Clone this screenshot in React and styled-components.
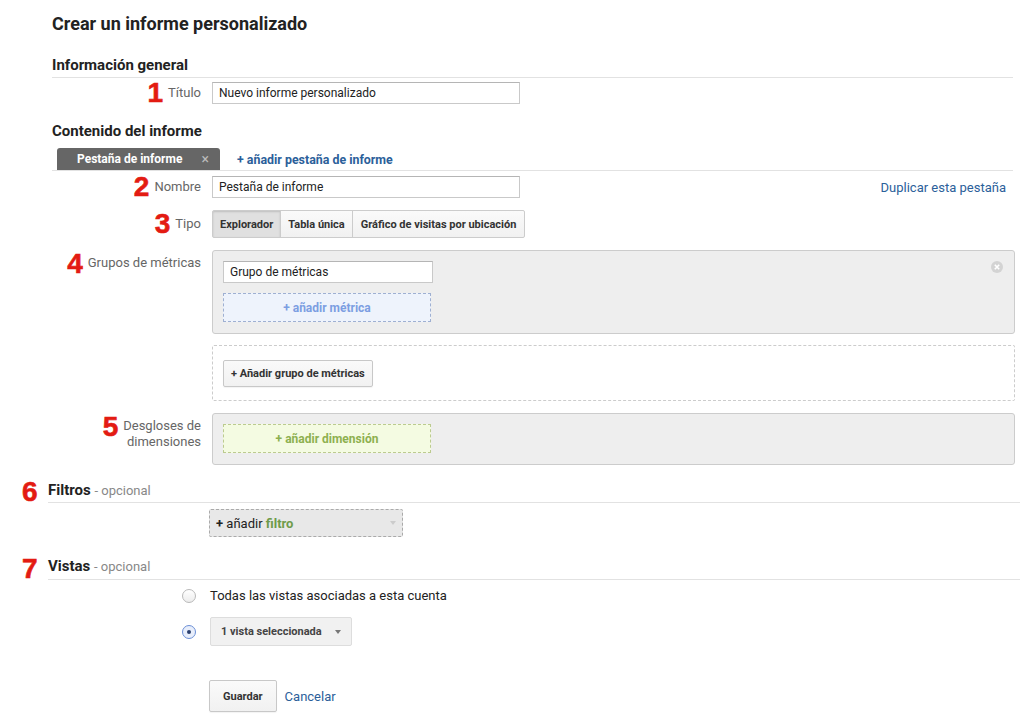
import React from 'react';
import styled, {createGlobalStyle} from 'styled-components';

const GlobalStyle = createGlobalStyle`
  body {
    margin: 0;
    background: #fff;
    font-family: Roboto, "Noto Sans", Arial, sans-serif;
    color: #222;
  }
`;

const Page = styled.div`
  width: 1026px;
  box-sizing: border-box;
  padding: 14px 6px 10px 48px;
`;

const Title = styled.h1`
  margin: 0 0 0 4px;
  font-size: 18px;
  line-height: 20px;
  font-weight: 700;
  color: #222;
`;

const SubHeading = styled.h2`
  margin: ${(p) => p.$mt || 0}px 7px 0 4px;
  font-size: 15px;
  line-height: 18px;
  font-weight: 700;
  color: #222;
  padding-bottom: ${(p) => (p.$line ? 3 : 0)}px;
  border-bottom: ${(p) => (p.$line ? '1px solid #e2e2e2' : 'none')};
`;

const Row = styled.div`
  display: grid;
  grid-template-columns: 164px 1fr;
  margin-top: ${(p) => p.$mt || 0}px;
  margin-right: 5px;
`;

const Label = styled.div`
  display: flex;
  justify-content: flex-end;
  align-items: ${(p) => (p.$top ? 'flex-start' : 'center')};
  padding: ${(p) => (p.$top ? '5px' : '0')} 11px 0 0;
  gap: 5px;
  font-size: 13px;
  line-height: 16px;
  color: #666;
  text-align: right;
`;

const Num = styled.span`
  font-family: "Liberation Sans", Arial, sans-serif;
  font-weight: 700;
  font-size: 28px;
  line-height: 18px;
  color: #e31b12;
  -webkit-text-stroke: 0.6px #e31b12;
`;

const Field = styled.div`
  display: flex;
  align-items: center;
  justify-content: space-between;
`;

const TextInput = styled.div`
  box-sizing: border-box;
  width: ${(p) => p.$w || 308}px;
  height: 22px;
  border: 1px solid #c9c9c9;
  border-top-color: #b5b5b5;
  background: #fff;
  font-size: 12px;
  line-height: 20px;
  padding: 0 6px;
  color: #222;
`;

const Link = styled.a`
  font-size: ${(p) => p.$size || 13}px;
  font-weight: ${(p) => (p.$bold ? 700 : 400)};
  color: #2b609a;
  text-decoration: none;
  cursor: pointer;
`;

const TabBar = styled.div`
  display: flex;
  align-items: flex-end;
  gap: 17px;
  margin: 8px 7px 0 4px;
  padding-left: 5px;
  border-bottom: 1px solid #e2e2e2;
`;

const Tab = styled.div`
  display: flex;
  align-items: center;
  justify-content: space-between;
  box-sizing: border-box;
  width: 163px;
  height: 22px;
  padding: 0 11px 0 20px;
  background: #666;
  border-radius: 3px 3px 0 0;
  color: #fff;
  font-size: 12px;
  font-weight: 700;
`;

const TabClose = styled.span`
  color: #bbb;
  font-size: 14px;
  font-weight: 400;
`;

const TabLinkWrap = styled.div`
  height: 22px;
  line-height: 22px;
`;

const Segments = styled.div`
  display: flex;
`;

const Segment = styled.div`
  box-sizing: border-box;
  height: 28px;
  padding: 0 ${(p) => p.$pad || 7}px;
  display: flex;
  align-items: center;
  font-size: 11px;
  font-weight: 700;
  color: #333;
  border: 1px solid #ccc;
  margin-left: -1px;
  background: ${(p) => (p.$active ? '#e0e0e0' : 'linear-gradient(#fafafa, #f1f1f1)')};
  box-shadow: ${(p) => (p.$active ? 'inset 0 1px 2px rgba(0,0,0,0.15)' : 'none')};
  &:first-child {
    margin-left: 0;
    border-radius: 2px 0 0 2px;
  }
  &:last-child {
    border-radius: 0 2px 2px 0;
  }
`;

const GrayBox = styled.div`
  position: relative;
  box-sizing: border-box;
  height: ${(p) => p.$h}px;
  padding: 10px;
  background: #eee;
  border: 1px solid #ccc;
  border-radius: 3px;
  display: flex;
  flex-direction: column;
  gap: 10px;
`;

const CloseBtn = styled.span`
  position: absolute;
  top: 10px;
  right: 11px;
  width: 12px;
  height: 12px;
  display: flex;
`;

const AddZone = styled.div`
  box-sizing: border-box;
  width: 208px;
  height: 29px;
  display: flex;
  align-items: center;
  justify-content: center;
  font-size: 12px;
  font-weight: 700;
  border: 1px dashed ${(p) => p.$border};
  background: ${(p) => p.$bg};
  color: ${(p) => p.$color};
`;

const DashedBox = styled.div`
  box-sizing: border-box;
  height: 56px;
  padding: 0 10px;
  display: flex;
  align-items: center;
  border: 1px dashed #ccc;
  border-radius: 2px;
`;

const Button = styled.button`
  box-sizing: border-box;
  height: ${(p) => p.$h || 27}px;
  padding: 0 ${(p) => p.$pad || 7}px;
  font-family: Roboto, Arial, sans-serif;
  font-size: 11px;
  font-weight: 700;
  color: #333;
  background: linear-gradient(#fafafa, #f1f1f1);
  border: 1px solid #c8c8c8;
  border-radius: 2px;
  box-shadow: 0 1px 1px rgba(0,0,0,0.05);
  cursor: pointer;
`;

const SectionHeader = styled.div`
  display: flex;
  align-items: center;
  margin: ${(p) => p.$mt}px 0 0 -26px;
`;

const SectionNum = styled(Num)`
  width: 14px;
  margin-right: 12px;
`;

const SectionTitle = styled.div`
  flex: 1;
  font-size: 15px;
  line-height: 18px;
  font-weight: 700;
  color: #222;
  padding-bottom: ${(p) => p.$pb}px;
  border-bottom: 1px solid #e2e2e2;
`;

const Optional = styled.span`
  font-size: 13px;
  font-weight: 400;
  color: #888;
`;

const Indented = styled.div`
  display: flex;
  align-items: center;
  gap: 8px;
  margin: ${(p) => p.$mt}px 0 0 161px;
`;

const FilterSelect = styled.div`
  box-sizing: border-box;
  width: 194px;
  height: 28px;
  padding: 0 6px;
  display: flex;
  align-items: center;
  justify-content: space-between;
  background: #e8e8e8;
  border: 1px dashed #aaa;
  border-radius: 2px;
  font-size: 13px;
  color: #222;
`;

const Green = styled.b`
  color: #6e9b4a;
`;

const Caret = styled.span`
  width: 0;
  height: 0;
  border-left: 3.5px solid transparent;
  border-right: 3.5px solid transparent;
  border-top: 4px solid ${(p) => p.$color};
`;

const RadioRow = styled.label`
  display: flex;
  align-items: center;
  gap: 14px;
  margin: ${(p) => p.$mt}px 0 0 134px;
  font-size: 13px;
  line-height: 20px;
  color: #222;
`;

const Radio = styled.span`
  box-sizing: border-box;
  width: 14px;
  height: 14px;
  border-radius: 50%;
  border: 1px solid ${(p) => (p.$checked ? '#6b8fd6' : '#b9b9b9')};
  background: ${(p) => (p.$checked ? '#e8eefb' : 'linear-gradient(#fff, #ececec)')};
  display: flex;
  align-items: center;
  justify-content: center;
  &::after {
    content: '';
    width: 4px;
    height: 4px;
    border-radius: 50%;
    background: ${(p) => (p.$checked ? '#2a3f6e' : 'transparent')};
  }
`;

const ViewSelect = styled.div`
  box-sizing: border-box;
  width: 142px;
  height: 29px;
  padding: 0 10px;
  display: flex;
  align-items: center;
  justify-content: space-between;
  background: #f1f1f1;
  border: 1px solid #ddd;
  border-radius: 2px;
  font-size: 11px;
  font-weight: 700;
  color: #444;
`;

function CloseIcon() {
  return (
    <svg width="12" height="12" viewBox="0 0 12 12">
      <circle cx="6" cy="6" r="6" fill="#d3d3d3" />
      <path d="M3.8 3.8 L8.2 8.2 M8.2 3.8 L3.8 8.2" stroke="#fff" strokeWidth="1.6" />
    </svg>
  );
}

export default function App() {
  return (
    <Page>
      <GlobalStyle />
      <Title>Crear un informe personalizado</Title>

      <SubHeading $mt={22} $line>Información general</SubHeading>
      <Row $mt={4}>
        <Label>
          <Num>1</Num>
          <span>Título</span>
        </Label>
        <Field>
          <TextInput>Nuevo informe personalizado</TextInput>
        </Field>
      </Row>

      <SubHeading $mt={18}>Contenido del informe</SubHeading>
      <TabBar>
        <Tab>
          Pestaña de informe <TabClose>×</TabClose>
        </Tab>
        <TabLinkWrap>
          <Link $size={12.4} $bold>+ añadir pestaña de informe</Link>
        </TabLinkWrap>
      </TabBar>

      <Row $mt={5}>
        <Label>
          <Num>2</Num>
          <span>Nombre</span>
        </Label>
        <Field>
          <TextInput>Pestaña de informe</TextInput>
          <Link style={{marginRight: 9}}>Duplicar esta pestaña</Link>
        </Field>
      </Row>

      <Row $mt={12}>
        <Label>
          <Num>3</Num>
          <span>Tipo</span>
        </Label>
        <Segments>
          <Segment $active>Explorador</Segment>
          <Segment>Tabla única</Segment>
          <Segment $pad={8}>Gráfico de visitas por ubicación</Segment>
        </Segments>
      </Row>

      <Row $mt={12}>
        <Label $top>
          <Num>4</Num>
          <span>Grupos de métricas</span>
        </Label>
        <GrayBox $h={84}>
          <TextInput $w={210}>Grupo de métricas</TextInput>
          <AddZone $bg="#eef3fc" $border="#9fb0d2" $color="#7c9ee2">
            + añadir métrica
          </AddZone>
          <CloseBtn>
            <CloseIcon />
          </CloseBtn>
        </GrayBox>
      </Row>

      <Row $mt={11}>
        <div />
        <DashedBox>
          <Button>+ Añadir grupo de métricas</Button>
        </DashedBox>
      </Row>

      <Row $mt={12}>
        <Label $top>
          <Num>5</Num>
          <span>
            Desgloses de
            <br />
            dimensiones
          </span>
        </Label>
        <GrayBox $h={52}>
          <AddZone $bg="#f4fbe2" $border="#bccb8f" $color="#8db04f">
            + añadir dimensión
          </AddZone>
        </GrayBox>
      </Row>

      <SectionHeader $mt={16}>
        <SectionNum>6</SectionNum>
        <SectionTitle $pb={2}>
          Filtros <Optional>- opcional</Optional>
        </SectionTitle>
      </SectionHeader>
      <Indented $mt={6}>
        <FilterSelect>
          <span>
            <b>+</b> añadir <Green>filtro</Green>
          </span>
          <Caret $color="#ccc" />
        </FilterSelect>
      </Indented>

      <SectionHeader $mt={20}>
        <SectionNum>7</SectionNum>
        <SectionTitle $pb={3}>
          Vistas <Optional>- opcional</Optional>
        </SectionTitle>
      </SectionHeader>
      <RadioRow $mt={6}>
        <Radio />
        <span>Todas las vistas asociadas a esta cuenta</span>
      </RadioRow>
      <RadioRow $mt={11}>
        <Radio $checked />
        <ViewSelect>
          <span>1 vista seleccionada</span>
          <Caret $color="#777" />
        </ViewSelect>
      </RadioRow>

      <Indented $mt={34}>
        <Button $h={32} $pad={13}>Guardar</Button>
        <Link>Cancelar</Link>
      </Indented>
    </Page>
  );
}
